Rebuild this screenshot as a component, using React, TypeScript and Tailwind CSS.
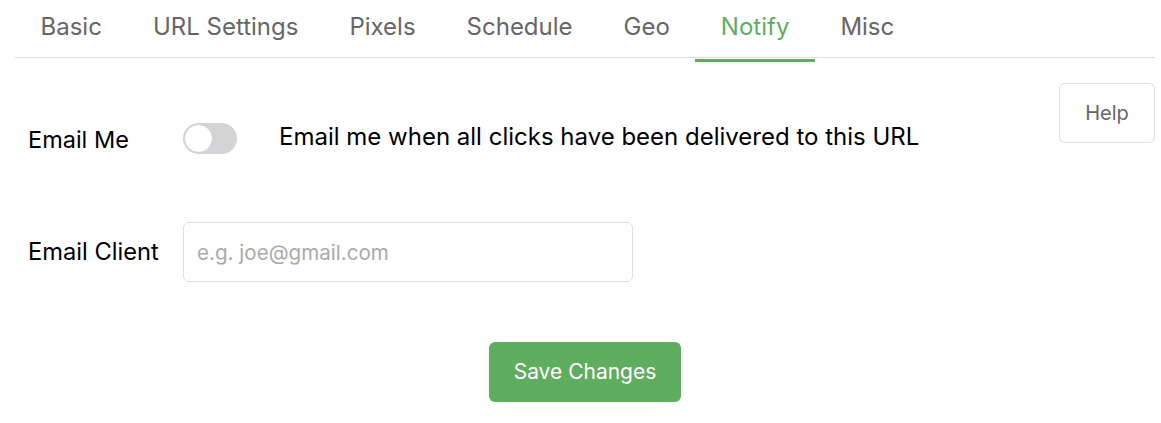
import * as React from "react";

const tabs = ["Basic", "URL Settings", "Pixels", "Schedule", "Geo", "Notify", "Misc"];

export default function App() {
    const [active, setActive] = React.useState("Notify");
    const [emailMe, setEmailMe] = React.useState(false);

    return (
        <div className="ml-[15px] w-[1140px] bg-white" style={{ fontFamily: "Inter, 'Noto Sans', sans-serif" }}>
            <div className="flex border-b border-[#dddddd]">
                {tabs.map(t => (
                    <button
                        key={t}
                        onClick={() => setActive(t)}
                        className={"relative px-[25.5px] h-[57px] pb-[4px] text-[24px] " + (t === active ? "text-[#5fad5f]" : "text-[#666666]")}
                    >
                        {t}
                        {t === active && <span className="absolute left-0 right-0 bottom-[-5px] h-[3px] bg-[#5fad5f]" />}
                    </button>
                ))}
            </div>

            <div className="flex justify-between">
                <div className="flex flex-col">
                    <div className="flex items-center mt-[65px] h-[31px]">
                        <span className="w-[168px] pl-[13px] pt-[3px] text-[23.5px] text-black">Email Me</span>
                        <button
                            onClick={() => setEmailMe(!emailMe)}
                            className={"relative w-[54px] h-[31px] rounded-full " + (emailMe ? "bg-[#5fad5f]" : "bg-[#d4d4d6]")}
                        >
                            <span className={"absolute top-[1px] w-[29px] h-[29px] rounded-full bg-white border border-[#cfcfcf] " + (emailMe ? "left-[24px]" : "left-[1px]")} />
                        </button>
                        <span className="ml-[42px] pb-[4px] text-[24px] text-black">Email me when all clicks have been delivered to this URL</span>
                    </div>

                    <div className="flex items-center mt-[68px]">
                        <span className="w-[168px] pl-[13px] text-[23.7px] text-black">Email Client</span>
                        <input
                            placeholder="e.g. joe@gmail.com"
                            className="w-[450px] h-[60px] px-[13px] rounded-[6px] border border-[#dddddd] text-[20.6px] text-black placeholder:text-[#aaaaaa] outline-none"
                        />
                    </div>

                    <div className="flex mt-[60px] pl-[474px]">
                        <button className="w-[192px] h-[60px] rounded-[6px] bg-[#5fad5f] text-white text-[21px]">Save Changes</button>
                    </div>
                </div>

                <button className="mt-[25px] w-[96px] h-[60px] rounded-[6px] border border-[#dddddd] text-[20px] text-[#666666]">Help</button>
            </div>
        </div>
    );
}
